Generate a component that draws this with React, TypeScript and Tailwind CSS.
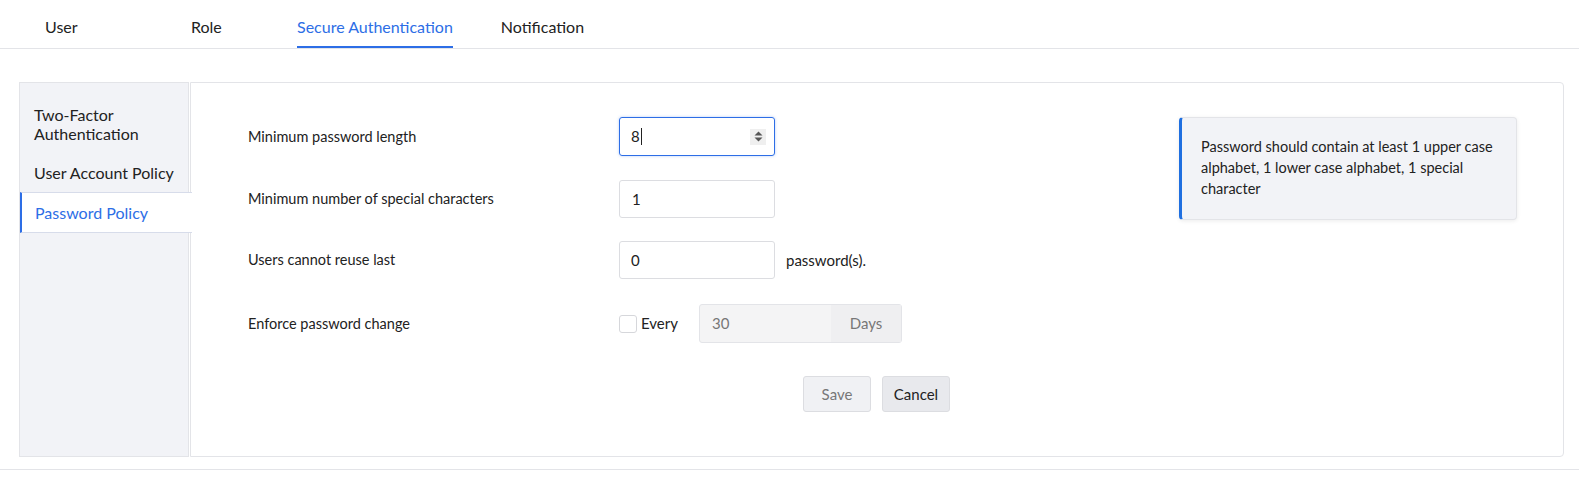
import React from "react";

export default function App() {
  return (
    <div className="w-[1579px] h-[490px] bg-white text-[#222]" style={{ fontFamily: "Lato, 'Noto Sans', sans-serif" }}>
      {/* Tabs */}
      <div className="h-[49px] border-b border-[#e3e4e8] flex items-end pl-[45px] text-[16px]">
        <div className="w-[146px] h-[48px] flex items-center pt-[6px]">User</div>
        <div className="w-[106px] h-[48px] flex items-center pt-[6px]">Role</div>
        <div className="h-[48px] flex items-center text-[#2d6ee6] border-b-[2px] border-[#2d6ee6] pt-[8px]">Secure Authentication</div>
        <div className="ml-[48px] h-[48px] flex items-center pt-[6px]">Notification</div>
      </div>

      {/* Body */}
      <div className="pl-[19px] pr-[15px] pt-[33px] h-[421px] border-b border-[#e3e4e8] flex">
        <div className="w-[170px] h-[375px] bg-[#f2f3f7] border border-[#e3e4e8] flex flex-col pt-[22px] text-[16px] shrink-0">
          <div className="pl-[14px] leading-[19px]">Two-Factor<br />Authentication</div>
          <div className="pl-[14px] mt-[20px] leading-[19px]">User Account Policy</div>
          <div className="mt-[10px] h-[41px] w-[172px] relative z-10 bg-white border-y border-[#d7dcea] border-l-[2px] border-l-[#2d6ee6] flex items-center pl-[13px] text-[#2d6ee6]">
            Password Policy
          </div>
        </div>
        <div className="flex-1 ml-[1px] h-[375px] border border-[#e3e4e8] rounded-r-[4px] bg-white flex">
          <div className="pl-[57px] pt-[34px] flex flex-col text-[14.5px]">
            <div className="flex items-center h-[39px]">
              <div className="w-[371px]">Minimum password length</div>
              <div className="w-[156px] h-[39px] border border-[#2d6ee6] rounded-[3px] shadow-[0_0_3px_rgba(45,110,230,0.35)] flex items-center pl-[11px] pr-[8px]">
                <span className="text-[15px]">8</span>
                <span className="w-px h-[17px] bg-[#222] ml-[1px]" />
                <span className="ml-auto w-[16px] h-[16px] bg-[#efefef] flex items-center justify-center">
                  <svg width="9" height="11" viewBox="0 0 9 11"><path d="M4.5 0.5 L8.5 4.5 H0.5Z M4.5 10.5 L8.5 6.5 H0.5Z" fill="#555" /></svg>
                </span>
              </div>
            </div>
            <div className="flex items-center h-[38px] mt-[24px]">
              <div className="w-[371px]">Minimum number of special characters</div>
              <div className="w-[156px] h-[38px] border border-[#dcdde1] rounded-[3px] flex items-center pl-[12px] text-[15px]">1</div>
            </div>
            <div className="flex items-center h-[38px] mt-[23px]">
              <div className="w-[371px]">Users cannot reuse last</div>
              <div className="w-[156px] h-[38px] border border-[#dcdde1] rounded-[3px] flex items-center pl-[11px] text-[15px]">0</div>
              <div className="ml-[11px] text-[15px]">password(s).</div>
            </div>
            <div className="flex items-center h-[39px] mt-[25px]">
              <div className="w-[371px]">Enforce password change</div>
              <div className="w-[18px] h-[18px] border border-[#d6d7db] rounded-[3px] bg-white" />
              <div className="ml-[4px] text-[15px] w-[58px]">Every</div>
              <div className="w-[203px] h-[39px] border border-[#e3e4e8] rounded-[3px] bg-[#f4f4f5] flex text-[#777] text-[15px]">
                <div className="flex-1 flex items-center pl-[12px]">30</div>
                <div className="w-[70px] bg-[#efeff1] flex items-center justify-center">Days</div>
              </div>
            </div>
            <div className="flex mt-[33px] ml-[555px] gap-[11px] text-[15px]">
              <button className="w-[68px] h-[36px] border border-[#dcdde1] rounded-[3px] bg-[#f0f1f4] text-[#777] font-normal">Save</button>
              <button className="w-[68px] h-[36px] border border-[#dcdde1] rounded-[3px] bg-[#e8e9ed] text-[#222] font-normal">Cancel</button>
            </div>
          </div>
          <div className="ml-auto mr-[46px] mt-[34px]">
            <div className="w-[338px] h-[103px] bg-[#f2f3f7] border border-[#e3e4e8] border-l-[3px] border-l-[#1f6fe0] rounded-[4px] shadow-[0_1px_4px_rgba(0,0,0,0.08)] pl-[19px] pr-[12px] pt-[18px] text-[14.5px] leading-[21px]">
              Password should contain at least 1 upper case alphabet, 1 lower case alphabet, 1 special character
            </div>
          </div>
        </div>
      </div>
    </div>
  );
}
